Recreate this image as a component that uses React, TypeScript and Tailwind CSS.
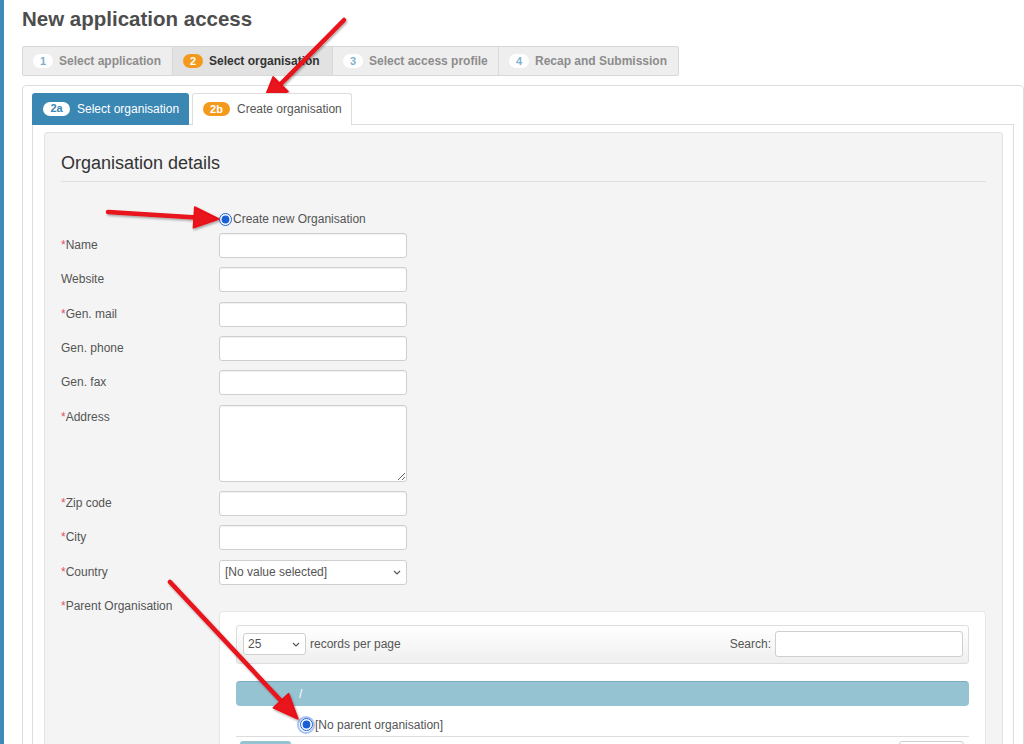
import React from "react";

const font = "font-['Liberation_Sans',Arial,Helvetica,sans-serif]";

function Chevron({ className = "" }: { className?: string }) {
  return (
    <svg width="8" height="5" viewBox="0 0 8 5" className={className}>
      <path d="M1 1 L4 4 L7 1" fill="none" stroke="#555" strokeWidth="1.2" />
    </svg>
  );
}

function Step({ n, label, active, w }: { n: string; label: string; active?: boolean; w: string }) {
  return (
    <div
      className={`flex h-full shrink-0 items-center gap-[6px] whitespace-nowrap px-[10px] border-r border-[#d8d8d8] ${w} ${
        active ? "bg-[#e2e2e2]" : ""
      }`}
    >
      <span
        className={`flex h-[14px] w-[20px] shrink-0 items-center justify-center rounded-full text-[11px] font-bold leading-none ${
          active ? "bg-[#f39a1c] text-white" : "bg-white text-[#7fb0d0]"
        }`}
      >
        {n}
      </span>
      <span className={`text-[12px] font-bold leading-none ${active ? "text-[#333]" : "text-[#8c8c8c]"}`}>
        {label}
      </span>
    </div>
  );
}

function Row({
  label,
  req,
  children,
}: {
  label: string;
  req?: boolean;
  children: React.ReactNode;
}) {
  return (
    <div className="flex items-start">
      <div className="w-[158px] shrink-0 whitespace-nowrap pt-[5px] text-[12px] leading-[15px] text-[#555]">
        {req && <span className="text-[#e0506e]">*</span>}
        {label}
      </div>
      {children}
    </div>
  );
}

function Input() {
  return (
    <div className="h-[25px] w-[188px] rounded-[3px] border border-[#cfcfcf] bg-white shadow-[inset_0_1px_1px_rgba(0,0,0,0.06)]" />
  );
}

function Arrow({ tail, tip, len = 25, hw = 10.5 }: { tail: [number, number]; tip: [number, number]; len?: number; hw?: number }) {
  const dx = tip[0] - tail[0];
  const dy = tip[1] - tail[1];
  const L = Math.hypot(dx, dy);
  const ux = dx / L;
  const uy = dy / L;
  const bx = tip[0] - ux * len;
  const by = tip[1] - uy * len;
  const px = -uy;
  const py = ux;
  const pts = `${tip[0]},${tip[1]} ${bx + px * hw},${by + py * hw} ${bx - px * hw},${by - py * hw}`;
  return (
    <g filter="url(#sh)">
      <line
        x1={tail[0]}
        y1={tail[1]}
        x2={bx + ux * 2}
        y2={by + uy * 2}
        stroke="#e8121a"
        strokeWidth="4.5"
        strokeLinecap="round"
      />
      <polygon points={pts} fill="#e8121a" stroke="#e8121a" strokeWidth="1.5" strokeLinejoin="round" />
    </g>
  );
}

export default function App() {
  return (
    <div className={`relative flex h-[744px] w-[1024px] overflow-hidden bg-white ${font}`}>
      <div className="w-[4px] shrink-0 bg-[#3d8ab8]" />
      <div className="flex-1 pl-[18px] pt-[6px]">
        <h1 className="whitespace-nowrap text-[20.5px] font-bold leading-[26px] text-[#4d4d4d]">New application access</h1>

        <div className="mt-[14px] flex h-[30px] w-[657px] overflow-hidden rounded-[2px] border border-[#d8d8d8] bg-[#eeeeee]">
          <Step n="1" label="Select application" w="w-[150px]" />
          <Step n="2" label="Select organisation" active w="w-[160px]" />
          <Step n="3" label="Select access profile" w="w-[166px]" />
          <Step n="4" label="Recap and Submission" w="flex-1 border-r-0" />
        </div>

        <div className="mt-[9px] w-[1002px] rounded-[4px] border border-[#dddddd] px-[9px] pt-[7px]">
          <div className="relative z-10 -mb-px flex gap-[3px]">
            <div className="flex h-[32px] w-[157px] shrink-0 items-center gap-[7px] whitespace-nowrap rounded-t-[3px] bg-[#3a87b3] px-[11px] pb-[1px]">
              <span className="flex h-[14px] w-[27px] shrink-0 items-center justify-center rounded-full bg-white text-[11px] font-bold leading-none text-[#3a87b3]">
                2a
              </span>
              <span className="text-[12px] leading-none text-white">Select organisation</span>
            </div>
            <div className="flex h-[32px] w-[160px] shrink-0 items-center gap-[7px] whitespace-nowrap rounded-t-[3px] border border-b-0 border-[#dddddd] bg-white px-[10px] pb-[1px]">
              <span className="flex h-[14px] w-[27px] shrink-0 items-center justify-center rounded-full bg-[#f39a1c] text-[11px] font-bold leading-none text-white">
                2b
              </span>
              <span className="text-[12px] leading-none text-[#555]">Create organisation</span>
            </div>
          </div>

          <div className="h-[640px] border border-[#dddddd] pl-[11px] pr-[10px] pt-[7px]">
            <div className="h-[640px] rounded-[3px] border border-[#e3e3e3] bg-[#f4f4f4] pl-[16px] pr-[16px] pt-[20px]">
              <h2 className="text-[18px] leading-[20px] text-[#333]">Organisation details</h2>
              <div className="mt-[8px] h-px bg-[#e0e0e0]" />

              <div className="mt-[29px] flex h-[16px] items-center pl-[158px]">
                <input type="radio" readOnly checked className="m-0 h-[13px] w-[13px] accent-[#1a5fd6]" />
                <span className="ml-[1px] text-[12px] leading-[14px] text-[#555]">Create new Organisation</span>
              </div>

              <div className="mt-[6px] flex flex-col gap-[9.33px]">
                <Row label="Name" req>
                  <Input />
                </Row>
                <Row label="Website">
                  <Input />
                </Row>
                <Row label="Gen. mail" req>
                  <Input />
                </Row>
                <Row label="Gen. phone">
                  <Input />
                </Row>
                <Row label="Gen. fax">
                  <Input />
                </Row>
                <Row label="Address" req>
                  <textarea
                    readOnly
                    className="m-0 block h-[77px] w-[188px] rounded-[3px] border border-[#cfcfcf] bg-white shadow-[inset_0_1px_1px_rgba(0,0,0,0.06)] outline-none"
                  />
                </Row>
                <Row label="Zip code" req>
                  <Input />
                </Row>
                <Row label="City" req>
                  <Input />
                </Row>
                <Row label="Country" req>
                  <div className="flex h-[25px] w-[188px] items-center justify-between rounded-[3px] border border-[#cfcfcf] bg-white pl-[5px] pr-[5px]">
                    <span className="text-[12px] text-[#555]">[No value selected]</span>
                    <Chevron />
                  </div>
                </Row>
                <Row label="Parent Organisation" req>
                  <div className="flex-1 pt-[17px]">
                    <div className="h-[200px] rounded-[4px] border border-[#e6e6e6] bg-white px-[16px] pt-[13px]">
                      <div className="flex h-[39px] items-center justify-between rounded-[3px] border border-[#dddddd] bg-gradient-to-b from-white to-[#efefef] pl-[6px] pr-[5px]">
                        <div className="flex items-center">
                          <div className="flex h-[22px] w-[63px] items-center justify-between rounded-[3px] border border-[#cfcfcf] bg-white pl-[4px] pr-[5px]">
                            <span className="text-[12px] text-[#555]">25</span>
                            <Chevron />
                          </div>
                          <span className="ml-[4px] text-[12px] text-[#555]">records per page</span>
                        </div>
                        <div className="flex items-center">
                          <span className="text-[12px] text-[#555]">Search:</span>
                          <div className="ml-[4px] h-[26px] w-[188px] rounded-[3px] border border-[#cfcfcf] bg-white" />
                        </div>
                      </div>

                      <div className="mt-[17px] flex h-[25px] items-center rounded-[4px] border-t border-[#78aac0] bg-[#96c3d2] pl-[63px]">
                        <span className="text-[12px] text-white">/</span>
                      </div>

                      <div className="flex items-center border-b border-[#dddddd] pb-[4px] pl-[63px] pt-[12px]">
                        <span className="flex h-[14px] w-[14px] items-center justify-center rounded-full ring-2 ring-[#a9c3f2]">
                          <input type="radio" readOnly checked className="m-0 h-[13px] w-[13px] accent-[#1a5fd6]" />
                        </span>
                        <span className="ml-[2px] text-[12px] leading-[14px] text-[#555]">[No parent organisation]</span>
                      </div>

                      <div className="flex justify-between pt-[4px]">
                        <div className="ml-[4px] h-[20px] w-[51px] rounded-[3px] bg-[#96c3d2]" />
                        <div className="mr-[5px] h-[20px] w-[65px] rounded-[3px] border border-[#cfcfcf] bg-white" />
                      </div>
                    </div>
                  </div>
                </Row>
              </div>
            </div>
          </div>
        </div>
      </div>

      <svg className="pointer-events-none absolute left-0 top-0" width="1024" height="744">
        <defs>
          <filter id="sh" x="-20%" y="-20%" width="140%" height="140%">
            <feDropShadow dx="1" dy="1.5" stdDeviation="1.2" floodColor="#000" floodOpacity="0.35" />
          </filter>
        </defs>
        <Arrow tail={[344, 20]} tip={[263, 102]} />
        <Arrow tail={[108, 212]} tip={[219, 219]} />
        <Arrow tail={[170, 582]} tip={[298, 719]} />
      </svg>
    </div>
  );
}
